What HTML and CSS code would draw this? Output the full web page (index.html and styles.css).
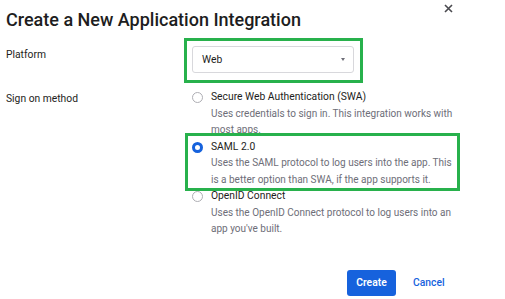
FILE: index.html
```html
<!DOCTYPE html>
<html lang="en">
  <head>
    <meta charset="UTF-8" />
    <meta name="viewport" content="width=device-width, initial-scale=1.0" />
    <title>Create a New Application Integration</title>
    <link rel="stylesheet" href="styles.css">
  </head>
  <body>
    <div class="dialog">
      <button class="close" aria-label="Close">
        <svg width="9" height="9" viewBox="0 0 9 9"><path d="M1 1L8 8M8 1L1 8" stroke="#4a4a4f" stroke-width="1.6" /></svg>
      </button>
      <h1 class="title">Create a New Application Integration</h1>

      <div class="row platform-row">
        <div class="label">Platform</div>
        <div class="highlight select-box">
          <div class="select">
            <span>Web</span>
            <span class="caret"></span>
          </div>
        </div>
      </div>

      <div class="row method-row">
        <div class="label">Sign on method</div>
        <div class="options">
          <div class="option">
            <span class="radio"></span>
            <div class="option-text">
              <div class="option-name">Secure Web Authentication (SWA)</div>
              <div class="option-desc">Uses credentials to sign in. This integration works with most apps.</div>
            </div>
          </div>
          <div class="highlight option-box">
            <div class="option">
              <span class="radio checked"></span>
              <div class="option-text">
                <div class="option-name">SAML 2.0</div>
                <div class="option-desc">Uses the SAML protocol to log users into the app. This is a better option than SWA, if the app supports it.</div>
              </div>
            </div>
          </div>
          <div class="option">
            <span class="radio"></span>
            <div class="option-text">
              <div class="option-name">OpenID Connect</div>
              <div class="option-desc">Uses the OpenID Connect protocol to log users into an app you've built.</div>
            </div>
          </div>
        </div>
      </div>

      <div class="actions">
        <button class="create">Create</button>
        <button class="cancel">Cancel</button>
      </div>
    </div>
  </body>
</html>
```

FILE: styles.css
```css
* {
  box-sizing: border-box;
}
body {
  margin: 0;
  background: #fff;
  font-family: Roboto, "Noto Sans", sans-serif;
  color: #1d1d21;
}
.dialog {
  position: relative;
  width: 505px;
  height: 299px;
  padding: 9px 6px 0 6px;
  overflow: hidden;
}
.close {
  position: absolute;
  top: 1px;
  left: 444px;
  padding: 0;
  border: 0;
  background: none;
}
.title {
  margin: 0;
  font-size: 18px;
  font-weight: 500;
  line-height: 22px;
}
.row {
  display: flex;
}
.label {
  width: 178px;
  font-size: 10.3px;
  color: #1d1d21;
}
.platform-row {
  margin-top: 7px;
}
.platform-row .label {
  padding-top: 10px;
}
.highlight {
  border: 3px solid #28b14c;
}
.select-box {
  width: 179px;
  height: 45px;
  padding: 5px 6px 7px 5px;
}
.select {
  display: flex;
  align-items: center;
  justify-content: space-between;
  height: 27px;
  padding: 0 8px 0 9px;
  border: 1px solid #d8d8dc;
  border-radius: 3px;
  font-size: 10.3px;
  color: #1d1d21;
}
.caret {
  width: 0;
  height: 0;
  border-left: 2.5px solid transparent;
  border-right: 2.5px solid transparent;
  border-top: 3px solid #6e6e78;
}
.method-row {
  margin-top: 6px;
}
.method-row .label {
  padding-top: 3px;
}
.options {
  display: flex;
  flex-direction: column;
}
.option {
  display: flex;
  padding-left: 8px;
}
.option-text {
  width: 250px;
}
.option-box {
  width: 275px;
  margin: -6px 0 -3px 1px;
  padding: 3px 0 0 0;
}
.option-box .option {
  padding-left: 4px;
}
.radio {
  flex: none;
  width: 11px;
  height: 11px;
  margin-top: 3px;
  margin-right: 8px;
  border: 1px solid #aeaeb4;
  border-radius: 50%;
}
.radio.checked {
  border: 3.5px solid #1662dd;
}
.option-name {
  font-size: 10.3px;
  line-height: 16.5px;
  color: #1d1d21;
}
.option-desc {
  font-size: 10px;
  line-height: 16.5px;
  color: #6e6e78;
}
.actions {
  display: flex;
  align-items: center;
  margin-top: 32px;
  margin-left: 341px;
  gap: 17px;
}
.create {
  width: 49px;
  height: 26px;
  border: 0;
  border-radius: 3px;
  background: #1662dd;
  color: #fff;
  font-family: Roboto, sans-serif;
  font-size: 10.3px;
  font-weight: 600;
}
.cancel {
  padding: 0;
  border: 0;
  background: none;
  color: #1662dd;
  font-family: Roboto, sans-serif;
  font-size: 10.3px;
  font-weight: 500;
}
```
